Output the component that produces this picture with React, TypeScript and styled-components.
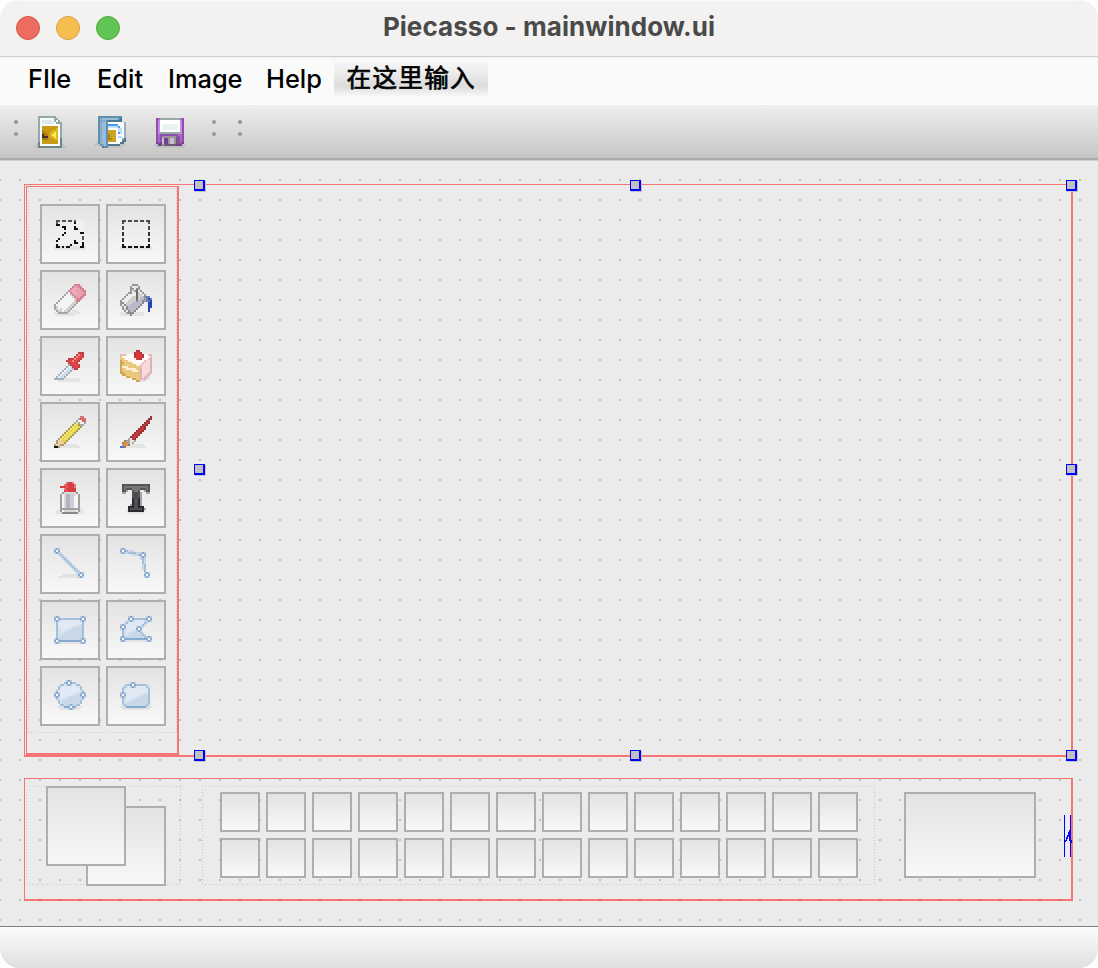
import React from "react";
import styled, { createGlobalStyle } from "styled-components";

const Global = createGlobalStyle`
  * { box-sizing: border-box; }
  html, body { margin: 0; padding: 0; background: #fff; }
  body { width: 1098px; height: 968px; overflow: hidden; }
`;

/* ---------- pixel icons ---------- */

type Art = { rows: string[]; colors: Record<string, string>; nodes?: [number, number][] };

const PixelSvg = styled.svg`
  display: block;
  width: 32px;
  height: 32px;
  flex: none;
`;

const SHADOW = "rgba(0,0,0,0.06)";

function PixelIcon({ art }: { art: Art }) {
  return (
    <PixelSvg viewBox="0 0 16 16" shapeRendering="crispEdges">
      {art.rows.flatMap((row, y) =>
        row.split("").map((c, x) =>
          c !== "." && (c === "s" || art.colors[c]) ? (
            <rect key={`${x}-${y}`} x={x} y={y} width={1} height={1} fill={c === "s" ? SHADOW : art.colors[c]} />
          ) : null
        )
      )}
      {(art.nodes ?? []).map(([x, y]) => (
        <g key={`n${x}-${y}`}>
          <rect x={x - 1} y={y - 1} width={3} height={3} fill="#b8cae0" />
          <rect x={x} y={y - 1} width={1} height={3} fill="#86a8ce" />
          <rect x={x - 1} y={y} width={3} height={1} fill="#86a8ce" />
          <rect x={x} y={y} width={1} height={1} fill="#fff" />
        </g>
      ))}
    </PixelSvg>
  );
}

const shapeColors = { b: "#a4bedb", B: "#86a9cf", l: "#c9d8e8", a: "#e1eaf4", c: "#d3e0ee", d: "#c8d8e9" };

const lasso: Art = {
  colors: { k: "#101010", g: "#555", w: "#f0f0f0" },
  rows: [
    "................",
    ".gg.gg.gg.gwww..",
    ".g.......wkwwww.",
    ".kk..wwwwwwwwww.",
    "....kkwwwwkwwww.",
    "...wwkwwwwkkwww.",
    "....wwwwwwwwwww.",
    "...wwkwwwwwwwkk.",
    "...wkwwwwwwwwww.",
    "..wwwwwwwwwwwwg.",
    "..kwwwwwwwwwwwg.",
    ".kwwwwwwwwkwwww.",
    ".wwwwwwwwwkkwwk.",
    ".kwwwwwwkwwwwwk.",
    "skkskskkssssskks",
    "ssssssssssssssss",
  ],
};

const marquee: Art = {
  colors: { g: "#4c4c4c", k: "#111", m: "#333" },
  rows: [
    "................",
    ".gg.gg.gg.gg.gg.",
    ".g............g.",
    "................",
    ".g............g.",
    ".g............g.",
    "................",
    ".m............m.",
    ".m............m.",
    "................",
    ".m............m.",
    ".m............m.",
    "................",
    ".k............k.",
    "skkskkskkskkskks",
    "ssssssssssssssss",
  ],
};

const eraser: Art = {
  colors: { r: "#cf8494", q: "#d88496", p: "#eba0b0", P: "#f0b4c0", g: "#a5a5a5", w: "#f4f4f4", l: "#d2d2d2" },
  rows: [
    "..........rrr...",
    ".........rppqr..",
    "........rpPppqr.",
    ".......rpPppppqr",
    "......gwrpPppppq",
    ".....gwwlqppppqr",
    "....gwwwwlqppqr.",
    "...gwwwwwwlqqr..",
    "..gwwwwwwwlqr...",
    ".gwwwwwwwllg....",
    "gwwwwwwwllg.....",
    "glwwwwwllg......",
    "glwlwwllg.......",
    ".gllwllg.sss....",
    "ssgggggssssss...",
    ".sssssssss......",
  ],
};

const bucket: Art = {
  colors: { g: "#989898", w: "#ededed", l: "#cfcfcf", v: "#b9b9cb", d: "#8a8a8a", D: "#6a6a6a", b: "#5b7fd8", B: "#2148b2" },
  rows: [
    "......ggg.......",
    ".....g...g......",
    ".....gg.dg......",
    ".....g.gDwg.....",
    "....ggwwDlwg....",
    "...gwwwwDllwg...",
    "..gwwwllDllvdbb.",
    ".gwwwlllDlvvgdBb",
    "gwwwlllldvvdgbbB",
    "gdwlllvvvvvd..BB",
    "gwdllvvvvvd...BB",
    ".gwdvvvvvd....BB",
    ".gldvvvvd.....B.",
    "..gwdvvd......B.",
    "sssgdddsssss....",
    "sssssdssssss....",
  ],
};

const dropper: Art = {
  colors: { r: "#c93d42", R: "#df4549", p: "#f08d8d", g: "#a9b0b9", w: "#edf3fa", b: "#ccdcee" },
  rows: [
    "................",
    "............rrr.",
    "...........rpRr.",
    "..........rpRRr.",
    ".......rrrpRRr..",
    "......rRRpRRr...",
    ".......rRRRr....",
    ".......grRRRr...",
    "......gwbrRRr...",
    ".....gwbbgrr....",
    "....gwbbg.......",
    "...gwbbg........",
    "..gwbbg.........",
    ".gwbbg..........",
    "gggggssssssss...",
    "..sssssssssss...",
  ],
};

const cake: Art = {
  colors: { r: "#bd3038", R: "#d9353c", p: "#f6dadd", q: "#dcb4ae", w: "#fffafa", y: "#e9c77c", o: "#d0a552", P: "#e6bcc0", f: "#fdf0d4" },
  rows: [
    "........rr......",
    ".......rRRr.....",
    "PPPfwwwrRRRrwwPP",
    "ywwwwwwrRRRrwwwP",
    "yyfwwwwwRRrwwwPq",
    "oyyyfwwwwwwwPppq",
    "ooyyyyfwwwwPpppq",
    "oyyyyyyyfwPppppq",
    "offfyyyyyyPppppq",
    "oyyfffffyyqppppq",
    "oyyyyyfffyqppppq",
    "ooyyyyyyyyqpppPq",
    ".ooyyyyyyyqppPq.",
    "...ooyyyyyqpPqs.",
    "......ooyyqPqss.",
    "........oosss...",
  ],
};

const pencil: Art = {
  colors: { r: "#c97a80", R: "#ed5b61", w: "#f2f2f2", g: "#a9a9a9", y: "#f3e56e", Y: "#e4d352", o: "#aa9d4e", t: "#e8d2a6", n: "#b49a6c", k: "#111" },
  rows: [
    ".............rr.",
    "............gRRr",
    "...........gwwRR",
    "..........gygwwg",
    ".........oyYogg.",
    "........oyYyYo..",
    ".......oyYyYo...",
    "......oyYyYo....",
    ".....oyYyYo.....",
    "....oyYyYo......",
    "...oyYyYo.......",
    "..nyYyYo........",
    ".nttYYo.........",
    ".nttto..........",
    "nttnnsssssss....",
    "kknssssssssss...",
  ],
};

const brush: Art = {
  colors: { r: "#96343a", R: "#c2383f", g: "#a4a4a4", w: "#e7e7e7", c: "#cf9858", d: "#a87843", b: "#4a73df" },
  rows: [
    "...............r",
    "..............rr",
    ".............rR.",
    "............rRr.",
    "...........rRr..",
    "..........rRr...",
    ".........rRRr...",
    "........rRRr....",
    ".......rRRr.....",
    "......rRRr......",
    ".....rRRr.......",
    "....gwRr........",
    "..dggwwg........",
    ".dccgwg.........",
    ".cccdsssssss....",
    "bbdssssssssss...",
  ],
};

const bottle: Art = {
  colors: { r: "#e3787b", R: "#d83d43", p: "#ef5b60", g: "#a0a0a0", w: "#f4f4f4", l: "#d8d8d8", m: "#b4b4c0", n: "#cdcdd8", d: "#878787" },
  rows: [
    "......rRRr......",
    ".....rRRRRr.....",
    "...RRRpRRRr.....",
    ".....rRRRRR.....",
    ".....RpRRRR.....",
    "....gllllllg....",
    "...gwlmmnnlwg...",
    "...gwlmmnnwwg...",
    "...gwlmmnnwwg...",
    "...gwlmmnnwwg...",
    "...gwlmmnnwwg...",
    "...gwlmmnnwwg...",
    "...gwlmmnnwwg...",
    "...ggggggggggs..",
    ".ssgwllllllwgss.",
    ".sssddddddddsss.",
  ],
};

const textTool: Art = {
  colors: { a: "#555", b: "#777", c: "#4a4a4e", d: "#505059", e: "#2a2a2c", f: "#a3a3a3" },
  rows: [
    "................",
    ".aaaaaaaaaaaaaa.",
    ".abbbbbbbbbbbba.",
    ".abaaabbbbaaaba.",
    ".aaf..abba..faa.",
    ".ff...accaf..ff.",
    "......accaf.....",
    "......accaf.....",
    "......eddef.....",
    "......eddef.....",
    "......eddef.....",
    ".....feddef.....",
    "....eeeddeee....",
    "....eddddddef...",
    "...seeeeeeees...",
    "....ssssssss....",
  ],
};

const line: Art = {
  colors: shapeColors,
  nodes: [[1, 1], [13, 13]],
  rows: [
    "................",
    "................",
    "..bl............",
    "..lbl...........",
    "...lbl..........",
    "....lbl.........",
    ".....lbl........",
    "......lbl.......",
    ".......lbl......",
    "........lbl.....",
    ".........lbl....",
    "..........lbl...",
    "...........lb...",
    "....ssssssss....",
    "..ssssssssss....",
    "................",
  ],
};

const polyline: Art = {
  colors: shapeColors,
  nodes: [[1, 1], [11, 3], [13, 13]],
  rows: [
    "................",
    "...blll.........",
    "...lbbbblll.....",
    "......lllb......",
    "...........c....",
    "..........lbl...",
    "...........bl...",
    "...........bl...",
    "...........lb...",
    "...........lb...",
    "...........lb...",
    "............b...",
    "............b...",
    "................",
    "................",
    "................",
  ],
};

const rectangle: Art = {
  colors: shapeColors,
  nodes: [[1, 2], [14, 2], [1, 13], [14, 13]],
  rows: [
    "................",
    "................",
    "..bbbbbbbbbbbb..",
    ".baaaaaaaaaaaab.",
    ".baaaaaaaaaaaab.",
    ".baaaaaaaaaaccb.",
    ".baaaaaaaccdddb.",
    ".bcaaaaccdddddb.",
    ".bccaccdddddddb.",
    ".bcccdddddddddb.",
    ".bccddddddddddb.",
    ".bcdddddddddddb.",
    ".bddddddddddddb.",
    "..BBBBBBBBBBBB..",
    "..ssssssssssss..",
    "................",
  ],
};

const polygon: Art = {
  colors: shapeColors,
  nodes: [[5, 2], [14, 2], [1, 6], [9, 7], [1, 12], [14, 12]],
  rows: [
    "................",
    "................",
    "......bbbbbbbb..",
    "...lbaaaaaaalb..",
    "..lbaaaaaaaabl..",
    "..baaaaaaacbl...",
    "..caaaaaaabl....",
    ".bcaaaaaac......",
    ".bcaaaccd.......",
    ".bcacddddcbl....",
    ".bccdddddddbl...",
    ".bcdddddddddbl..",
    "..BBBBBBBBBBBB..",
    ".sssssssssssss..",
    "................",
    "................",
  ],
};

const ellipse: Art = {
  colors: shapeColors,
  nodes: [[7, 1], [1, 7], [14, 7], [8, 13]],
  rows: [
    "................",
    ".....bb..bb.....",
    "...bbaaaaaabb...",
    "..bcaaaaaaaacb..",
    "..baaaaaaaaaab..",
    ".baaaaaaaaaaacb.",
    ".baaaaaaaaaccdb.",
    ".baaaaaaaccdddb.",
    ".baaaaccddddddb.",
    ".bcaccddddddddb.",
    "..bcdddddddddb..",
    "..bcdddddddddb..",
    "...bbddddddbb...",
    "..sssBBBBBBsss..",
    "...ssssssssss...",
    "................",
  ],
};

const rounded: Art = {
  colors: shapeColors,
  nodes: [[6, 2], [1, 7]],
  rows: [
    "................",
    "................",
    "..lbbbbbbbbbbl..",
    ".lbcaaaaaaaaabl.",
    ".bcaaaaaaaaaaab.",
    ".baaaaaaaaaaaab.",
    ".baaaaaaaaaaccb.",
    ".baaaaaaaaccddb.",
    ".baaaaaaccddddb.",
    ".bcaaaccddddddb.",
    ".bcaccddddddddb.",
    ".bcdddddddddddb.",
    ".lbddddddddddbl.",
    "sslBBBBBBBBBBlss",
    ".ssssssssssssss.",
    "................",
  ],
};

const imageFile: Art = {
  colors: { g: "#94a8a8", G: "#6d8484", w: "#f8fbfb", l: "#dce9e9", y: "#c79b16", Y: "#dfbb1e", L: "#fbee5c", o: "#a9800e", k: "#4c2831" },
  rows: [
    "..ggggggggg.....",
    "..gwwwwwwwgg....",
    "..gwlllllwgwg...",
    "..gwllllllwggg..",
    "..gwwwwwwwwwwg..",
    "..gwyyyyyyyywg..",
    "..gwyyyyyyyYwg..",
    "..gwoyyyyYYYwg..",
    "..gwooyyYYLYwg..",
    "..gwkooyYLLYwg..",
    "..gwkkkyYYLYwg..",
    "..gwoooyyyYYwG..",
    "..gwyyyyyyyywG..",
    "..GwyyyyyyyywG..",
    ".sGwwwwwwwwwwGs.",
    "ssGGGGGGGGGGGGss",
  ],
};

const folder: Art = {
  colors: { b: "#5f90ad", B: "#84adcb", l: "#9abcd6", d: "#4e7892", w: "#fbfdff", y: "#cca622", o: "#ab840e", h: "#4e97ef", p: "#bddfff", t: "#96b1bc" },
  rows: [
    "..bbbbbbbbbbbb..",
    "..bBllllllllbd..",
    "..bBBBbddddddd..",
    "..bBllbwwwwwwwwt",
    "..bBllbhhhhhwwwt",
    "..bBllbppppphwwt",
    "..bBllbwwwwwppwt",
    "..bBllbyyyywppwt",
    "..bBllbyyyywhpwt",
    "..bBllboyyywwwwt",
    "..bBllboyyywppwt",
    "..bBllbooyywwwtd",
    "..bBllbyyyywwwdd",
    ".sbBllbwwwwwwdd.",
    "sssbBlbddddddsss",
    "....dbbsssssss..",
  ],
};

const floppy: Art = {
  colors: { p: "#8d4fab", P: "#74408f", l: "#c48be0", m: "#a968c4", w: "#fff", W: "#e9f2f1", g: "#9a939b", G: "#c6c3c8", d: "#6d5a75", t: "#9aaaa8" },
  rows: [
    "................",
    ".pmttttttttttmp.",
    ".plwwwwwwwwwwlp.",
    ".plwwwwwwwwwwlp.",
    ".plwWWWWWWWWwlp.",
    ".plwWWWWWWWWwlp.",
    ".plwWWWWWWWWwlp.",
    ".plwwwwwwwwwwlp.",
    ".plttttttttttlp.",
    ".pmpppppppppmmp.",
    ".pmpgggggggppmp.",
    ".pmpGPPgGGgdpmp.",
    ".pmpGPPgGGgdpmp.",
    ".PpPGPPgGGgdppP.",
    "ssPPgddddddPPPss",
    ".ssssssssssssss.",
  ],
};

/* ---------- window chrome ---------- */

const Window = styled.div`
  width: 1098px;
  height: 968px;
  display: flex;
  flex-direction: column;
  overflow: hidden;
  border-radius: 20px;
  background: #ebebeb;
  font-family: Inter, "Noto Sans CJK SC", sans-serif;
`;

const TitleBar = styled.header`
  display: grid;
  grid-template-columns: 160px 1fr 160px;
  align-items: center;
  height: 57px;
  flex: none;
  padding-bottom: 1px;
  background: #f3f2f0;
  border-top: 1px solid #fafafa;
  border-bottom: 1px solid #cfcfcf;
`;

const Lights = styled.div`
  display: flex;
  gap: 16px;
  padding: 0 0 1px 16px;
`;

const Light = styled.span<{ $fill: string; $edge: string }>`
  width: 24px;
  height: 24px;
  border-radius: 50%;
  background: ${(p) => p.$fill};
  border: 1px solid ${(p) => p.$edge};
`;

const Title = styled.h1`
  margin: 0;
  padding-bottom: 2px;
  text-align: center;
  font-size: 26px;
  font-weight: 700;
  line-height: 32px;
  letter-spacing: 0.05px;
  color: #4a4a4a;
  white-space: nowrap;
`;

const MenuBar = styled.nav`
  display: flex;
  height: 48px;
  flex: none;
  padding-left: 16px;
  background: #fafafa;
  border-top: 1px solid #f0f0f0;
  border-bottom: 1px solid #fff;
`;

const MenuItem = styled.span<{ $width: number }>`
  width: ${(p) => p.$width}px;
  padding-left: 12px;
  font-size: 25.4px;
  font-weight: 500;
  line-height: 42px;
  color: #000;
  white-space: nowrap;
`;

const TypeHere = styled(MenuItem)`
  height: 39px;
  padding-left: 12.5px;
  font-family: "Noto Sans CJK SC", sans-serif;
  font-size: 24.6px;
  font-weight: 400;
  letter-spacing: 1.3px;
  line-height: 37px;
  -webkit-text-stroke: 0.7px #000;
  background: linear-gradient(#fafafa, #ededed 35%, #dcdcdc 72%, #fafafa);
`;

const ToolBar = styled.div`
  display: flex;
  align-items: flex-start;
  height: 55px;
  flex: none;
  padding: 11px 0 0 14px;
  background: linear-gradient(#efefef, #c6c6c6 52px);
  background-clip: padding-box;
  border-bottom: 2px solid #ababab;
  box-shadow: 0 1px 0 #cfcfcf;
  z-index: 1;
`;

const Grip = styled.span<{ $gap: number }>`
  display: flex;
  flex-direction: column;
  gap: 8px;
  padding-top: 4px;
  margin-right: ${(p) => p.$gap}px;
  &::before,
  &::after {
    content: "";
    width: 4px;
    height: 4px;
    border-radius: 50%;
    background: #989898;
  }
`;

const ToolActions = styled.div`
  display: flex;
  gap: 28px;
  margin-right: 26px;
`;

/* ---------- form canvas ---------- */

const Canvas = styled.main`
  position: relative;
  flex: none;
  height: 767px;
  padding: 24px 25px 0 24px;
  border-bottom: 1px solid #808080;
  background:
    linear-gradient(to right, transparent 2px, #ebebeb 2px) -1px -1px / 20px 20px,
    linear-gradient(to bottom, #bebebe 2px, #ebebeb 2px) -1px -1px / 20px 20px;
`;

const layoutFrame = `
  border: solid rgba(255, 0, 0, 0.5);
  border-width: 1px 2px 2px 1px;
`;

const CentralRow = styled.section`
  ${layoutFrame}
  display: flex;
  height: 573px;
  padding: 1px 0 0 1px;
`;

const ToolColumn = styled.div`
  ${layoutFrame}
  width: 153px;
  height: 569px;
  padding: 1px;
`;

const dash = (dir: string) => `repeating-linear-gradient(${dir}, #c9c9c9 0 1px, transparent 1px 3px)`;

const WidgetBox = styled.div<{ $w: number; $h: number; $pad: string }>`
  position: relative;
  flex: none;
  width: ${(p) => p.$w}px;
  height: ${(p) => p.$h}px;
  padding: ${(p) => p.$pad};
  background: ${dash("to right")} top / 100% 1px no-repeat, ${dash("to right")} bottom / 100% 1px no-repeat,
    ${dash("to bottom")} left / 1px 100% no-repeat, ${dash("to bottom")} right / 1px 100% no-repeat;
`;

const ButtonGrid = styled.div<{ $cols: number; $size: number }>`
  display: grid;
  grid-template-columns: repeat(${(p) => p.$cols}, ${(p) => p.$size}px);
  grid-auto-rows: ${(p) => p.$size}px;
  gap: 6px;
`;

const Bevel = styled.div`
  display: flex;
  align-items: center;
  justify-content: center;
  border: 2px solid #aeaeae;
  background: linear-gradient(#e3e3e3, #f8f8f8);
`;

const PaletteRow = styled.section`
  ${layoutFrame}
  display: flex;
  height: 123px;
  margin-top: 21px;
  padding: 7px 0 0 1px;
`;

const ColorWell = styled(Bevel)<{ $x: number; $y: number }>`
  position: absolute;
  left: ${(p) => p.$x}px;
  top: ${(p) => p.$y}px;
  width: 80px;
  height: 80px;
`;

const Swatches = styled.div`
  margin-left: 21px;
`;

const Preview = styled(Bevel)`
  width: 132px;
  height: 86px;
  margin: 6px 28px 0 29px;
  flex: none;
`;

const Spring = styled.svg`
  flex: none;
  width: 9px;
  height: 42px;
  margin: 29px -2px 0 0;
`;

const Handle = styled.i<{ $x: number; $y: number }>`
  position: absolute;
  left: ${(p) => p.$x}px;
  top: ${(p) => p.$y}px;
  width: 11px;
  height: 11px;
  border: solid #00f;
  border-width: 1px 2px 2px 1px;
  background: #c0c0c0;
  box-shadow: 1px 1px 0 #c4c4cc;
`;

const StatusBar = styled.footer`
  flex: 1;
  background: linear-gradient(#fcfcfc, #dfdfdf);
`;

const tools = [
  lasso, marquee, eraser, bucket, dropper, cake, pencil, brush,
  bottle, textTool, line, polyline, rectangle, polygon, ellipse, rounded,
];

const handles: [number, number][] = [
  [194, 20], [630, 20], [1066, 20],
  [194, 304], [1066, 304],
  [194, 590], [630, 590], [1066, 590],
];

export default function App() {
  return (
    <>
      <Global />
      <Window>
        <TitleBar>
          <Lights>
            <Light $fill="#ed6b60" $edge="#d35347" />
            <Light $fill="#f5bf4f" $edge="#d6a13c" />
            <Light $fill="#61c555" $edge="#50a73f" />
          </Lights>
          <Title>Piecasso - mainwindow.ui</Title>
        </TitleBar>
        <MenuBar>
          <MenuItem $width={69}>FIle</MenuItem>
          <MenuItem $width={71}>Edit</MenuItem>
          <MenuItem $width={98}>Image</MenuItem>
          <MenuItem $width={80}>Help</MenuItem>
          <TypeHere $width={154}>在这里输入</TypeHere>
        </MenuBar>
        <ToolBar>
          <Grip $gap={16} />
          <ToolActions>
            <PixelIcon art={imageFile} />
            <PixelIcon art={folder} />
            <PixelIcon art={floppy} />
          </ToolActions>
          <Grip $gap={22} />
          <Grip $gap={0} />
        </ToolBar>
        <Canvas>
          <CentralRow>
            <ToolColumn>
              <WidgetBox $w={149} $h={545} $pad="16px 12px 0">
                <ButtonGrid $cols={2} $size={60}>
                  {tools.map((art, i) => (
                    <Bevel key={i}>
                      <PixelIcon art={art} />
                    </Bevel>
                  ))}
                </ButtonGrid>
              </WidgetBox>
            </ToolColumn>
          </CentralRow>
          <PaletteRow>
            <WidgetBox $w={155} $h={99} $pad="0">
              <ColorWell $x={60} $y={20} />
              <ColorWell $x={20} $y={0} />
            </WidgetBox>
            <Swatches>
              <WidgetBox $w={673} $h={99} $pad="6px 18px 0">
                <ButtonGrid $cols={14} $size={40}>
                  {Array.from({ length: 28 }, (_, i) => (
                    <Bevel key={i} />
                  ))}
                </ButtonGrid>
              </WidgetBox>
            </Swatches>
            <Preview />
            <Spring viewBox="0 0 9 42" shapeRendering="crispEdges">
              <path d="M0 0h1v42h-1zM6 0h1v42h-1z" fill="#00f" />
              <path d="M1 25h1v2h-1zM2 22h1v4h-1zM3 20h1v4h-1zM4 17h1v5h-1zM5 15h1v11h-1zM7 25h1v3h-1z" fill="#00f" />
            </Spring>
          </PaletteRow>
          {handles.map(([x, y]) => (
            <Handle key={`${x}-${y}`} $x={x} $y={y} />
          ))}
        </Canvas>
        <StatusBar />
      </Window>
    </>
  );
}
